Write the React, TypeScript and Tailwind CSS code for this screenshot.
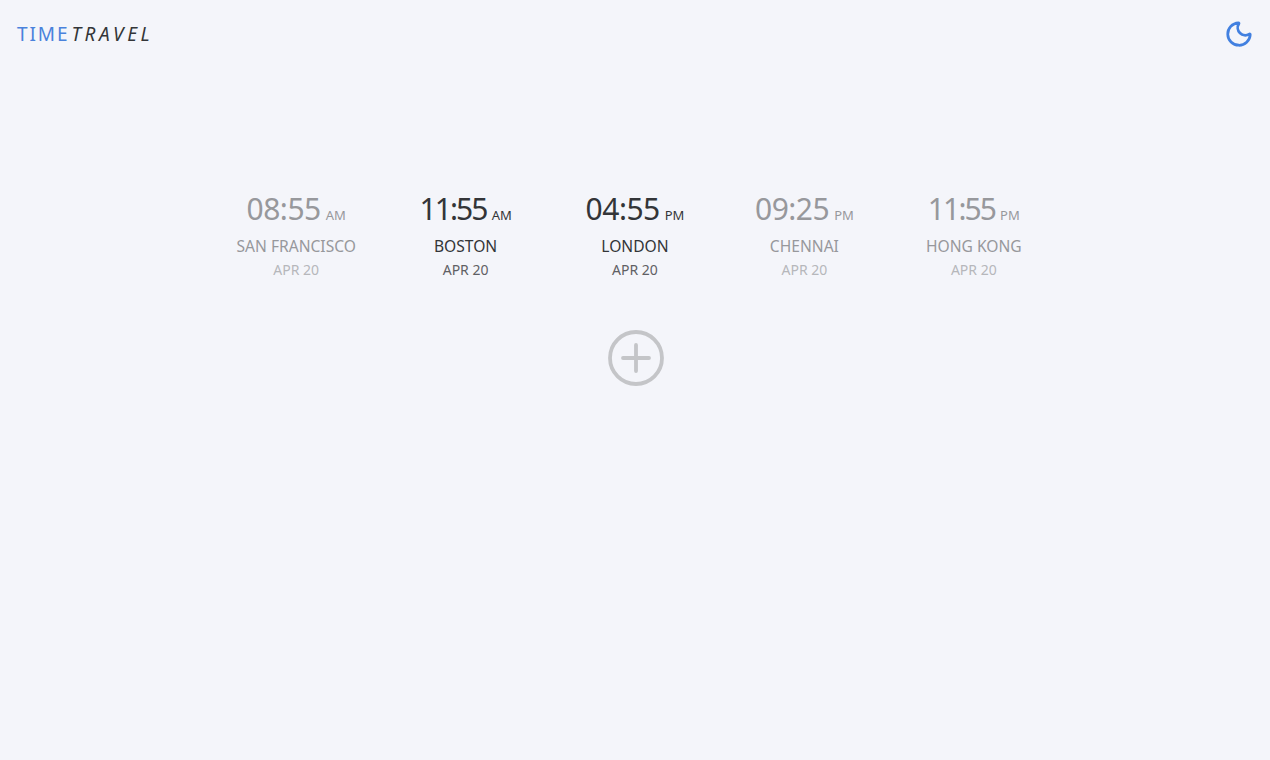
import { Moon } from "lucide-react";

const cities = [
  { time: "08:55", ampm: "AM", name: "SAN FRANCISCO", date: "APR 20", active: false, ones: false },
  { time: "11:55", ampm: "AM", name: "BOSTON", date: "APR 20", active: true, ones: true },
  { time: "04:55", ampm: "PM", name: "LONDON", date: "APR 20", active: true, ones: false },
  { time: "09:25", ampm: "PM", name: "CHENNAI", date: "APR 20", active: false, ones: false },
  { time: "11:55", ampm: "PM", name: "HONG KONG", date: "APR 20", active: false, ones: true },
];

function CityColumn({ time, ampm, name, date, active, ones }: (typeof cities)[number]) {
  return (
    <div className="flex flex-col items-center">
      <div className={`flex h-[36px] items-baseline gap-[5px] leading-[36px] ${active ? "text-[#333538]" : "text-[#97989c]"}`}>
        <span className={`text-[30px] ${ones ? "tracking-[-1.9px]" : "tracking-[-0.5px]"}`}>{time}</span>
        <span className="text-[13px]">{ampm}</span>
      </div>
      <div className={`mt-[9px] text-[15.6px] leading-[20px] ${active ? "text-[#333538]" : "text-[#97989c]"}`}>{name}</div>
      <div className={`mt-[5px] text-[14px] leading-[18px] ${active ? "text-[#5f6064]" : "text-[#b6b7bb]"}`}>{date}</div>
    </div>
  );
}

export default function App() {
  return (
    <div className="h-[760px] w-[1270px] overflow-hidden bg-[#f4f5fa] font-['Noto_Sans',sans-serif]">
      {/* Header */}
      <header className="flex h-[68px] items-center justify-between pl-[17px] pr-[16px]">
        <div className="flex items-baseline text-[19px] leading-none">
          <span className="tracking-[1.9px] text-[#4a82dc]">TIME</span>
          <span className="ml-[2px] italic tracking-[3.6px] text-[#333538]">TRAVEL</span>
        </div>
        <Moon className="h-[30px] w-[30px] text-[#4280e0]" strokeWidth={2.2} />
      </header>

      {/* Clocks */}
      <main className="flex flex-col items-center pt-[123px]">
        <div className="grid w-[847px] grid-cols-5">
          {cities.map((city) => (
            <CityColumn key={city.name} {...city} />
          ))}
        </div>

        <button className="ml-[1px] mt-[51px]">
          <svg width="56" height="56" viewBox="0 0 56 56" fill="none" stroke="#c4c5c8" strokeWidth="3.8" strokeLinecap="round">
            <circle cx="28" cy="28" r="26" />
            <path d="M28 15v26M15 28h26" />
          </svg>
        </button>
      </main>
    </div>
  );
}
